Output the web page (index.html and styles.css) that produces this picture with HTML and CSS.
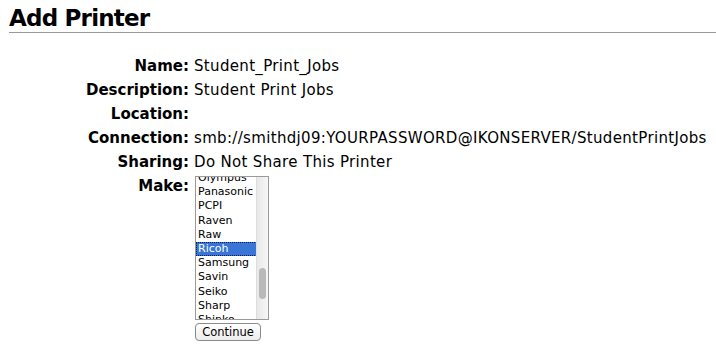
FILE: index.html
```html
<!DOCTYPE html>
<html lang="en">
<head>
    <meta charset="UTF-8">
    <title>Add Printer</title>
    <link rel="stylesheet" href="styles.css">
</head>
<body>
<h2 class="title">Add Printer</h2>
<div class="form">
    <div class="label">Name:</div>
    <div class="value">Student_Print_Jobs</div>
    <div class="label">Description:</div>
    <div class="value">Student Print Jobs</div>
    <div class="label">Location:</div>
    <div class="value"></div>
    <div class="label">Connection:</div>
    <div class="value">smb://smithdj09:YOURPASSWORD@IKONSERVER/StudentPrintJobs</div>
    <div class="label">Sharing:</div>
    <div class="value">Do Not Share This Printer</div>
    <div class="label">Make:</div>
    <div class="value">
        <div class="listbox">
            <ul class="items">
                <li>Olympus</li>
                <li>Panasonic</li>
                <li>PCPI</li>
                <li>Raven</li>
                <li>Raw</li>
                <li class="selected">Ricoh</li>
                <li>Samsung</li>
                <li>Savin</li>
                <li>Seiko</li>
                <li>Sharp</li>
                <li>Shinko</li>
            </ul>
            <div class="track"><div class="thumb"></div></div>
        </div>
        <button class="btn">Continue</button>
    </div>
</div>
</body>
</html>
```

FILE: styles.css
```css
* {
    margin: 0;
    padding: 0;
    box-sizing: border-box;
}

body {
    background: #fff;
    color: #000;
    font-family: "DejaVu Sans", "Liberation Sans", sans-serif;
    padding: 0 0 0 9px;
}

.title {
    font-size: 23px;
    font-weight: bold;
    line-height: 28px;
    padding-top: 4px;
    border-bottom: 1px solid #999;
    height: 33px;
    letter-spacing: -0.8px;
}

.form {
    display: grid;
    grid-template-columns: 180px auto;
    column-gap: 5px;
    margin-top: 21px;
    font-size: 15px;
    line-height: 24px;
}

.label {
    text-align: right;
    font-weight: bold;
}

.value {
    min-height: 24px;
    letter-spacing: 0.33px;
}

.listbox {
    position: relative;
    width: 74px;
    height: 144px;
    margin: 2px 0 0 1px;
    border: 1px solid #9a9a9a;
    overflow: hidden;
    background: #fff;
}

.items {
    list-style: none;
    margin-top: -6px;
    font-size: 11px;
    line-height: 14.2px;
    letter-spacing: 0;
}

.items > li {
    padding-left: 2px;
    width: 61px;
    height: 14.2px;
}

.items > li.selected {
    background: #3875d7;
    color: #fff;
    outline: 1px dotted #0a1a5a;
    outline-offset: -1px;
}

.track {
    position: absolute;
    right: 0;
    top: 0;
    bottom: 0;
    width: 12px;
    background: linear-gradient(to right, #e8e8e8, #f6f6f6);
    border-left: 1px solid #ddd;
}

.thumb {
    position: absolute;
    left: 2px;
    top: 91px;
    width: 7px;
    height: 31px;
    border-radius: 4px;
    background: #b9b9b9;
}

.btn {
    display: block;
    margin: 3px 0 0 1px;
    width: 66px;
    height: 18px;
    font-family: inherit;
    font-size: 11.5px;
    letter-spacing: 0;
    border: 1px solid #8a8a8a;
    border-radius: 4px;
    background: linear-gradient(#fff, #ececec);
    color: #000;
}
```
